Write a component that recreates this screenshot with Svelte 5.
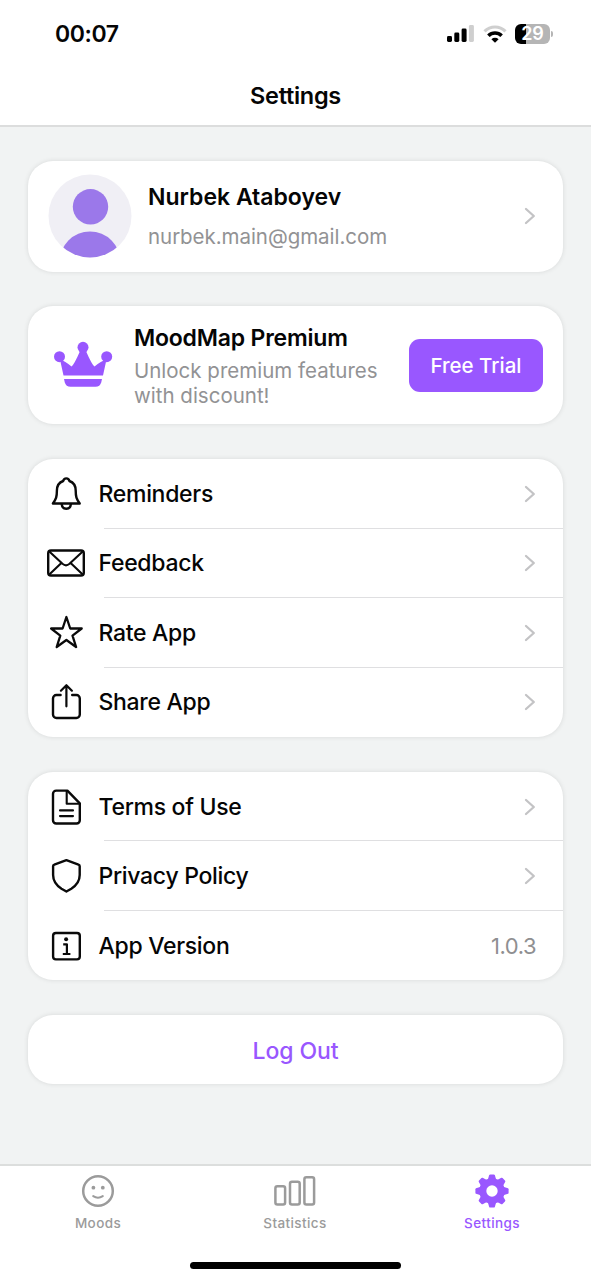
<script lang="ts">
  type Item = { icon: string; label: string; value?: string };

  const general: Item[] = [
    { icon: "bell", label: "Reminders" },
    { icon: "mail", label: "Feedback" },
    { icon: "star", label: "Rate App" },
    { icon: "share", label: "Share App" },
  ];
  const about: Item[] = [
    { icon: "doc", label: "Terms of Use" },
    { icon: "shield", label: "Privacy Policy" },
    { icon: "info", label: "App Version", value: "1.0.3" },
  ];
  const tabs = ["Moods", "Statistics", "Settings"];

  let activeTab = $state("Settings");
</script>

{#snippet chevron()}
  <svg class="chevron" width="12" height="18" viewBox="0 0 12 18" fill="none">
    <path d="M2 2l7.800 7L2 16" stroke="#c3c3c5" stroke-width="2.300" stroke-linecap="round" stroke-linejoin="round" />
  </svg>
{/snippet}

{#snippet icon(name: string)}
  <svg class="icon" width="40" height="40" viewBox="0 0 40 40" fill="none" stroke="#0a0a0a" stroke-width="2.400" stroke-linejoin="round" stroke-linecap="round">
    {#if name === "bell"}
      <path d="M20.300 4.400c-1.800 0-2.800 1.100-3.100 2.600-4.200 1.500-6.300 5-6.300 9.600 0 6.200-.7 8.300-4 12.900h26.800c-3.300-4.600-4-6.700-4-12.900 0-4.600-2.100-8.100-6.300-9.600-.3-1.500-1.300-2.600-3.100-2.600Z" />
      <path d="M15.700 30.200c.3 2.800 2.100 4.600 4.600 4.600s4.300-1.800 4.600-4.600" />
    {:else if name === "mail"}
      <rect x="2.200" y="7.500" width="35.600" height="25" rx="2.800" />
      <path d="M3.300 8.600l13.200 12.200c2.300 2 4.700 2 7 0L36.700 8.600M3.300 31.500l11.800-11.200M36.700 31.500L24.900 20.300" stroke-width="2.100" />
    {:else if name === "star"}
      <path d="M20.400 4l3.800 11.500H35.700L26.500 22.600 30.100 34 20.400 27 10.700 34l3.600-11.400L5.100 15.500H16.600Z" stroke-width="2.300" />
    {:else if name === "share"}
      <path d="M14.600 13H10.400a3.400 3.400 0 0 0-3.400 3.400v16.200a3.400 3.400 0 0 0 3.400 3.400h20a3.400 3.400 0 0 0 3.400-3.400V16.400a3.400 3.400 0 0 0-3.400-3.400h-4.200" />
      <path d="M20.400 24.300V3.500M14.900 8.700l5.500-5.500 5.500 5.500" stroke-width="2.200" />
    {:else if name === "doc"}
      <path d="M20.600 3.600H10.200A3.200 3.200 0 0 0 7 6.800v26.500a3.200 3.200 0 0 0 3.200 3.200h20.400a3.200 3.200 0 0 0 3.200-3.200V16.300L21.400 3.600Z" />
      <path d="M20.700 4v12.700h12.800M14 23.400h13M14 29.100h13" stroke-width="2.100" />
    {:else if name === "shield"}
      <path d="M20.400 4.200L8.300 8.600Q7.100 9 7.100 10.200V19c0 6.900 3.300 10.400 8.400 13.700l4.900 2.800 4.900-2.800c5.100-3.300 8.400-6.800 8.400-13.700V10.200q0-1.200-1.200-1.600Z" />
    {:else if name === "info"}
      <rect x="7.100" y="7" width="26.700" height="26.400" rx="2.800" />
      <circle cx="20.100" cy="13.300" r="2" fill="#0a0a0a" stroke="none" />
      <path d="M17.200 18.300h3.700v9.500M16.800 28h7.600" stroke-linecap="butt" stroke-width="2.200" />
    {/if}
  </svg>
{/snippet}

{#snippet list(items: Item[])}
  <ul class="card list">
    {#each items as item (item.label)}
      <li class="row">
        {@render icon(item.icon)}
        <span class="label">{item.label}</span>
        {#if item.value}
          <span class="value">{item.value}</span>
        {:else}
          {@render chevron()}
        {/if}
      </li>
    {/each}
  </ul>
{/snippet}

<div class="screen">
  <header>
    <div class="status">
      <span class="time">00:07</span>
      <div class="indicators">
        <svg width="27" height="18" viewBox="0 0 27 18">
          <rect x="0" y="11" width="5" height="6" rx="1.400" />
          <rect x="7.300" y="7.500" width="5" height="9.500" rx="1.400" />
          <rect x="14.600" y="3.500" width="5" height="13.500" rx="1.400" />
          <rect x="21.900" y="0" width="5" height="17" rx="1.400" fill="#cfcfcf" />
        </svg>
        <svg width="24" height="18" viewBox="0 0 24 18" fill="none" stroke-width="3.200">
          <path d="M1.500 6.300a15 15 0 0 1 21 0" stroke="#cfcfcf" />
          <path d="M5.400 10.700a9.400 9.400 0 0 1 13.200 0" stroke="#000" stroke-width="3.600" />
          <path d="M12 17.800l-3.600-3.500a5.100 5.100 0 0 1 7.200 0Z" fill="#000" />
        </svg>
        <div class="battery"><span>29</span></div>
      </div>
    </div>
    <h1>Settings</h1>
  </header>

  <main>
    <section class="card profile">
      <svg class="avatar" width="84" height="84" viewBox="0 0 84 84">
        <clipPath id="avatar-clip"><circle cx="42" cy="42" r="41.500" /></clipPath>
        <circle cx="42" cy="42" r="41.500" fill="#f0eff5" />
        <circle cx="42.500" cy="32.800" r="17.700" fill="#9b78ea" />
        <circle cx="42" cy="88" r="30.500" fill="#9b78ea" clip-path="url(#avatar-clip)" />
      </svg>
      <div class="who">
        <div class="name">Nurbek Ataboyev</div>
        <div class="email">nurbek.main@gmail.com</div>
      </div>
      {@render chevron()}
    </section>

    <section class="card premium">
      <svg width="60" height="48" viewBox="0 0 60 48" fill="#9957ff">
        <circle cx="30" cy="6.300" r="5.500" />
        <circle cx="6.500" cy="15.700" r="5.500" />
        <circle cx="53.700" cy="15.700" r="5.500" />
        <path d="M7 18.500Q12 20 18.500 25.500Q21 24 27.500 9h5Q39 24 41.500 25.500Q48 20 53.500 18.500L50 34.500H10.500Z" />
        <path d="M11 38h38l-.8 3.500Q47 45.700 42.500 45.700h-25Q13 45.700 11.800 41.500Z" />
      </svg>
      <div class="offer">
        <div class="title">MoodMap Premium</div>
        <p>Unlock premium features<br />with discount!</p>
      </div>
      <button class="trial">Free Trial</button>
    </section>

    {@render list(general)}
    {@render list(about)}

    <button class="card logout">Log Out</button>
  </main>

  <nav>
    {#each tabs as tab (tab)}
      <button class="tab" class:active={tab === activeTab} onclick={() => (activeTab = tab)}>
        <svg width="44" height="36" viewBox="0 0 44 36" fill="none" stroke="currentColor" stroke-width="2.500">
          {#if tab === "Moods"}
            <circle cx="22" cy="18" r="14.800" />
            <circle cx="17.400" cy="14.700" r="1.900" fill="currentColor" stroke="none" />
            <circle cx="26.800" cy="14.700" r="1.900" fill="currentColor" stroke="none" />
            <path d="M17.200 23.100q4.800 3.200 9.600 0" stroke-width="2" stroke-linecap="round" />
          {:else if tab === "Statistics"}
            <rect x="2.400" y="13.300" width="9.700" height="18.300" rx="2" />
            <rect x="17" y="8.800" width="9.700" height="22.800" rx="2" />
            <rect x="31.400" y="4.300" width="9.700" height="27.300" rx="2" />
          {:else}
            <g fill="currentColor" stroke="none">
              {#each [0, 45, 90, 135] as angle}
                <path d="M18 6l1.200-4Q19.500 1.400 20.300 1.400h3.400Q24.500 1.400 24.800 2L26 6v24l-1.200 4q-.3.600-1.100.600h-3.400q-.8 0-1.100-.600L18 30Z" transform="rotate({angle} 22 18)" />
              {/each}
              <circle cx="22" cy="18" r="12.800" />
              <circle cx="22" cy="18" r="5.700" fill="#fff" />
            </g>
          {/if}
        </svg>
        <span>{tab}</span>
      </button>
    {/each}
  </nav>
  <div class="home"></div>
</div>

<style>
  :global(body) {
    margin: 0;
    background: #fff;
  }
  .screen {
    width: 591px;
    height: 1280px;
    display: flex;
    flex-direction: column;
    overflow: hidden;
    background: #fff;
    color: #050505;
    font-family: Inter, "Liberation Sans", sans-serif;
  }
  button {
    border: none;
    font-family: inherit;
    cursor: pointer;
  }
  header {
    height: 125px;
    flex: none;
    border-bottom: 2px solid #dcdddd;
  }
  .status {
    display: flex;
    justify-content: space-between;
    align-items: center;
    height: 67px;
    padding: 0 41px 0 55px;
  }
  .time {
    font-size: 23px;
    font-weight: 600;
    letter-spacing: -0.4px;
  }
  .indicators {
    display: flex;
    align-items: center;
    gap: 8.500px;
  }
  .battery {
    position: relative;
    width: 35px;
    height: 20px;
    border-radius: 6px;
    background: linear-gradient(to right, #000 11px, #b5b5b5 11px);
    color: #fff;
    font-size: 18px;
    font-weight: 600;
    line-height: 20px;
    text-align: center;
  }
  .battery::after {
    content: "";
    position: absolute;
    right: -3px;
    top: 7px;
    width: 2px;
    height: 6px;
    border-radius: 0 2px 2px 0;
    background: #b5b5b5;
  }
  h1 {
    margin: 0;
    font-size: 23.5px;
    font-weight: 600;
    line-height: 58px;
    letter-spacing: -0.3px;
    text-align: center;
  }
  main {
    flex: 1;
    display: flex;
    flex-direction: column;
    gap: 34.8px;
    padding: 33.500px 28px 0;
    background: #f1f3f3;
  }
  .card {
    box-sizing: border-box;
    flex: none;
    border-radius: 25px;
    background: #fff;
    box-shadow: 0 0 5px rgba(0, 0, 0, 0.11);
  }
  .profile {
    display: flex;
    align-items: center;
    height: 111px;
    padding: 0 27px 0 20px;
  }
  .who {
    flex: 1;
    margin-left: 16px;
    padding-top: 2px;
  }
  .name {
    font-size: 23px;
    font-weight: 600;
    line-height: 30px;
    letter-spacing: 0;
  }
  .email {
    margin-top: 10px;
    font-size: 20.5px;
    line-height: 30px;
    letter-spacing: -0.05px;
    color: #929294;
  }
  .premium {
    display: flex;
    align-items: center;
    height: 118px;
    padding: 0 20px 0 25px;
  }
  .offer {
    flex: 1;
    margin-left: 21px;
    padding-top: 2px;
  }
  .title {
    font-size: 23px;
    font-weight: 600;
    line-height: 28px;
    letter-spacing: -0.2px;
  }
  .offer p {
    margin: 7px 0 0;
    font-size: 20.5px;
    line-height: 24.5px;
    color: #929294;
    white-space: nowrap;
  }
  .trial {
    width: 134px;
    height: 53px;
    padding: 0;
    border-radius: 11px;
    background: #9957ff;
    color: #fff;
    font-size: 20.5px;
    font-weight: 500;
  }
  .list {
    margin: 0;
    padding: 0;
    list-style: none;
  }
  .row {
    display: flex;
    align-items: center;
    height: 69.5px;
    padding: 0 27px 0 18px;
    background: linear-gradient(#dfdfe1, #dfdfe1) 76px 100% / 100% 1px no-repeat;
  }
  .row:last-child {
    background: none;
  }
  .label {
    flex: 1;
    margin-left: 12.5px;
    font-size: 23px;
    font-weight: 500;
    letter-spacing: -0.3px;
  }
  .value {
    font-size: 22px;
    letter-spacing: -0.5px;
    color: #8f8f91;
  }
  .logout {
    height: 69px;
    padding: 2px 0 0;
    color: #9957ff;
    font-size: 23px;
    font-weight: 500;
    letter-spacing: -0.1px;
  }
  nav {
    flex: none;
    box-sizing: border-box;
    display: grid;
    grid-template-columns: repeat(3, 1fr);
    height: 98px;
    border-top: 2px solid #dcdedd;
  }
  .tab {
    display: flex;
    flex-direction: column;
    align-items: center;
    padding: 7px 1px 0 0;
    background: none;
    color: #9b9b9b;
    font-size: 13.5px;
    font-weight: 500;
    line-height: 18px;
    letter-spacing: 0.4px;
  }
  .tab span {
    margin-top: 5px;
  }
  .tab.active {
    color: #9957ff;
  }
  .home {
    flex: none;
    align-self: center;
    width: 211px;
    height: 7px;
    margin-bottom: 11px;
    border-radius: 4px;
    background: #000;
  }
</style>
